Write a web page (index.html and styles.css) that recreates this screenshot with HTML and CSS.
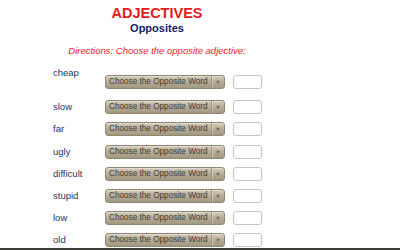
FILE: index.html
```html
<!DOCTYPE html>
<html>
<head>
<meta charset="utf-8">
<link rel="stylesheet" href="styles.css">
</head>
<body>
<div class="page">
  <main class="sheet">
    <h1 class="title">ADJECTIVES</h1>
    <h2 class="subtitle">Opposites</h2>
    <p class="directions">Directions: Choose the opposite adjective:</p>
    <div class="rows">
      <div class="row first">
        <span class="word">cheap</span>
        <div class="pick"><span class="pick-text">Choose the Opposite Word</span><span class="pick-arrow">▼</span></div>
        <div class="answer"></div>
      </div>
      <div class="row">
        <span class="word">slow</span>
        <div class="pick"><span class="pick-text">Choose the Opposite Word</span><span class="pick-arrow">▼</span></div>
        <div class="answer"></div>
      </div>
      <div class="row">
        <span class="word">far</span>
        <div class="pick"><span class="pick-text">Choose the Opposite Word</span><span class="pick-arrow">▼</span></div>
        <div class="answer"></div>
      </div>
      <div class="row">
        <span class="word">ugly</span>
        <div class="pick"><span class="pick-text">Choose the Opposite Word</span><span class="pick-arrow">▼</span></div>
        <div class="answer"></div>
      </div>
      <div class="row">
        <span class="word">difficult</span>
        <div class="pick"><span class="pick-text">Choose the Opposite Word</span><span class="pick-arrow">▼</span></div>
        <div class="answer"></div>
      </div>
      <div class="row">
        <span class="word">stupid</span>
        <div class="pick"><span class="pick-text">Choose the Opposite Word</span><span class="pick-arrow">▼</span></div>
        <div class="answer"></div>
      </div>
      <div class="row">
        <span class="word">low</span>
        <div class="pick"><span class="pick-text">Choose the Opposite Word</span><span class="pick-arrow">▼</span></div>
        <div class="answer"></div>
      </div>
      <div class="row">
        <span class="word">old</span>
        <div class="pick"><span class="pick-text">Choose the Opposite Word</span><span class="pick-arrow">▼</span></div>
        <div class="answer"></div>
      </div>
    </div>
  </main>
  <div class="taskbar"></div>
</div>
</body>
</html>
```

FILE: styles.css
```css
html, body {
  margin: 0;
  padding: 0;
  background: #ffffff;
}

body {
  font-family: "Liberation Sans", Arial, sans-serif;
}

.page {
  display: flex;
  flex-direction: column;
  height: 250px;
  width: 400px;
  overflow: hidden;
}

.sheet {
  flex: 1;
  overflow: hidden;
  width: 314px;
  padding-top: 5px;
}

.title {
  margin: 0;
  text-align: center;
  font-size: 14.5px;
  line-height: 16px;
  font-weight: bold;
  color: #e31b1b;
}

.subtitle {
  margin: 1px 0 0;
  text-align: center;
  font-size: 11px;
  line-height: 13px;
  font-weight: bold;
  color: #0c1d5c;
}

.directions {
  margin: 10px 0 0;
  text-align: center;
  font-size: 9.5px;
  line-height: 11px;
  font-style: italic;
  color: #e5232a;
}

.rows {
  display: flex;
  flex-direction: column;
  gap: 8.2px;
  margin-top: 19px;
  padding-left: 53px;
}

.row {
  display: grid;
  grid-template-columns: 44px 120px 29px;
  column-gap: 8px;
  align-items: center;
  height: 14px;
}

.row.first {
  margin-bottom: 3px;
}

.word {
  font-size: 9.5px;
  line-height: 14px;
  color: #253667;
}

.row.first .word {
  align-self: start;
  margin-top: -9px;
}

.pick {
  display: flex;
  align-items: stretch;
  box-sizing: border-box;
  height: 14px;
  border: 1px solid #8f8673;
  border-radius: 3px;
  background: linear-gradient(#d4ccb9, #b3aa95 55%, #a2987f);
  box-shadow: inset 0 1px 0 rgba(255, 255, 255, 0.35);
  overflow: hidden;
}

.pick-text {
  flex: 1;
  padding-left: 3px;
  font-size: 8.2px;
  line-height: 12px;
  color: #3b3833;
  white-space: nowrap;
  overflow: hidden;
}

.pick-arrow {
  width: 12px;
  border-left: 1px solid #9a917d;
  box-shadow: inset 1px 0 0 rgba(255, 255, 255, 0.35);
  text-align: center;
  font-size: 5.5px;
  line-height: 12px;
  color: #6a6253;
}

.answer {
  box-sizing: border-box;
  height: 14px;
  border: 1px solid #c4c4c4;
  border-radius: 3px;
  background: #ffffff;
}

.taskbar {
  height: 2px;
  flex: none;
  background: #3c3b37;
}
```
